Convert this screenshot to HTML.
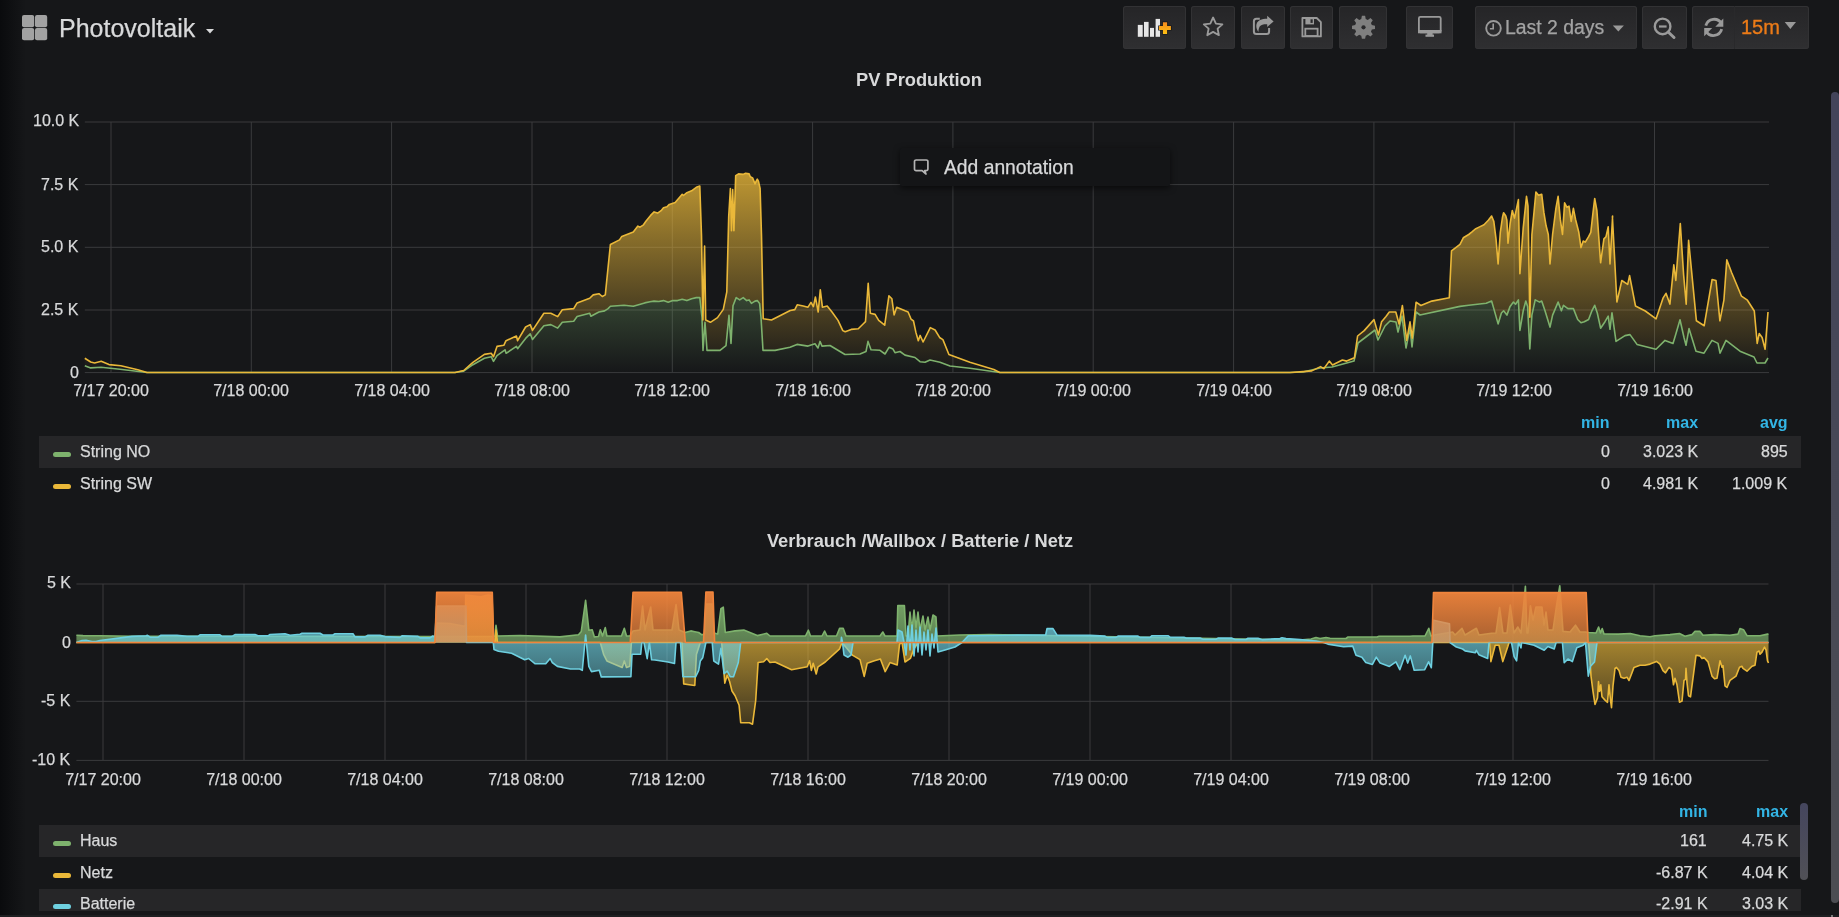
<!DOCTYPE html>
<html><head><meta charset="utf-8">
<style>
html,body{margin:0;padding:0;}
body{width:1839px;height:917px;overflow:hidden;background:#161719;position:relative;font-family:"Liberation Sans",sans-serif;}
.charts{position:absolute;left:0;top:0;}
.t{position:absolute;white-space:nowrap;will-change:transform;-webkit-text-stroke:0.25px currentColor;}
.leftshade{position:absolute;left:0;top:0;width:26px;height:917px;background:linear-gradient(to right,#0a0b0d,rgba(22,23,25,0));}
.row{position:absolute;left:39px;width:1762px;height:32px;background:#262628;}
.sw{position:absolute;left:53.2px;width:18px;height:5px;border-radius:2.5px;}
.btn{position:absolute;top:6px;height:42.7px;border-radius:3px;background:linear-gradient(#252527,#2f2f31);box-shadow:inset 0 0 0 1px #323234;box-sizing:border-box;}
.scroll{position:absolute;border-radius:4px;}
.popup{position:absolute;left:900px;top:147.7px;width:270px;height:38px;background:#141517;border-radius:2px;box-shadow:0 2px 6px rgba(0,0,0,0.6);}
</style></head>
<body>
<div class="leftshade"></div>
<div class="row" style="top:436px"></div>
<div class="row" style="top:825px"></div>
<div class="row" style="top:888.8px;height:22.2px"></div>
<svg class="charts" width="1839" height="917" viewBox="0 0 1839 917">
<defs>
<linearGradient id="g1y" gradientUnits="userSpaceOnUse" x1="0" y1="122" x2="0" y2="372.6"><stop offset="0" stop-color="#eab839" stop-opacity="1.0"/><stop offset="1" stop-color="#eab839" stop-opacity="0"/></linearGradient><linearGradient id="g1g" gradientUnits="userSpaceOnUse" x1="0" y1="122" x2="0" y2="372.6"><stop offset="0" stop-color="#7eb26d" stop-opacity="1.0"/><stop offset="1" stop-color="#7eb26d" stop-opacity="0"/></linearGradient>
<linearGradient id="g2g" gradientUnits="userSpaceOnUse" x1="0" y1="584" x2="0" y2="760"><stop offset="0" stop-color="#7eb26d" stop-opacity="1.0"/><stop offset="1" stop-color="#7eb26d" stop-opacity="0"/></linearGradient><linearGradient id="g2y" gradientUnits="userSpaceOnUse" x1="0" y1="584" x2="0" y2="760"><stop offset="0" stop-color="#eab839" stop-opacity="1.0"/><stop offset="1" stop-color="#eab839" stop-opacity="0"/></linearGradient><linearGradient id="g2c" gradientUnits="userSpaceOnUse" x1="0" y1="584" x2="0" y2="760"><stop offset="0" stop-color="#6ed0e0" stop-opacity="1.0"/><stop offset="1" stop-color="#6ed0e0" stop-opacity="0"/></linearGradient><linearGradient id="g2o" gradientUnits="userSpaceOnUse" x1="0" y1="584" x2="0" y2="760"><stop offset="0" stop-color="#ef843c" stop-opacity="1.0"/><stop offset="1" stop-color="#ef843c" stop-opacity="0"/></linearGradient>
</defs>
<g stroke="#3a3b3d" stroke-width="1" fill="none"><line x1="84.8" y1="122" x2="1769" y2="122"/><line x1="84.8" y1="184.6" x2="1769" y2="184.6"/><line x1="84.8" y1="247.3" x2="1769" y2="247.3"/><line x1="84.8" y1="310" x2="1769" y2="310"/><line x1="84.8" y1="372.6" x2="1769" y2="372.6"/><line x1="111.0" y1="122" x2="111.0" y2="372.6"/><line x1="251.3" y1="122" x2="251.3" y2="372.6"/><line x1="391.6" y1="122" x2="391.6" y2="372.6"/><line x1="532.0" y1="122" x2="532.0" y2="372.6"/><line x1="672.3" y1="122" x2="672.3" y2="372.6"/><line x1="812.6" y1="122" x2="812.6" y2="372.6"/><line x1="952.9" y1="122" x2="952.9" y2="372.6"/><line x1="1093.2" y1="122" x2="1093.2" y2="372.6"/><line x1="1233.6" y1="122" x2="1233.6" y2="372.6"/><line x1="1373.9" y1="122" x2="1373.9" y2="372.6"/><line x1="1514.2" y1="122" x2="1514.2" y2="372.6"/><line x1="1654.5" y1="122" x2="1654.5" y2="372.6"/><line x1="76.4" y1="584" x2="1768.5" y2="584"/><line x1="76.4" y1="642.6" x2="1768.5" y2="642.6"/><line x1="76.4" y1="701.3" x2="1768.5" y2="701.3"/><line x1="76.4" y1="760.4" x2="1768.5" y2="760.4"/><line x1="103.0" y1="584" x2="103.0" y2="760"/><line x1="244.0" y1="584" x2="244.0" y2="760"/><line x1="385.0" y1="584" x2="385.0" y2="760"/><line x1="526.0" y1="584" x2="526.0" y2="760"/><line x1="667.0" y1="584" x2="667.0" y2="760"/><line x1="808.0" y1="584" x2="808.0" y2="760"/><line x1="949.0" y1="584" x2="949.0" y2="760"/><line x1="1090.0" y1="584" x2="1090.0" y2="760"/><line x1="1231.0" y1="584" x2="1231.0" y2="760"/><line x1="1372.0" y1="584" x2="1372.0" y2="760"/><line x1="1513.0" y1="584" x2="1513.0" y2="760"/><line x1="1654.0" y1="584" x2="1654.0" y2="760"/></g>
<g>
<path d="M84.8,372.6 L84.8,365.7 L90.7,367.9 L101.0,367.3 L120.0,369.2 L147.0,372.5 L455.0,372.5 L463.7,371.1 L472.9,364.7 L484.4,358.3 L491.2,356.7 L493.5,361.3 L497.0,355.6 L505.0,349.8 L506.1,353.3 L516.4,346.4 L517.6,348.7 L525.6,338.4 L530.2,333.8 L532.5,339.5 L543.9,325.8 L550.8,324.6 L557.7,328.1 L562.3,322.3 L573.7,321.2 L577.1,316.6 L589.7,313.2 L590.9,316.2 L598.9,312.0 L604.6,310.9 L608.1,308.6 L610.4,306.3 L624.1,305.2 L633.3,306.3 L644.7,302.9 L650.0,301.7 L654.1,301.1 L658.8,301.5 L663.5,300.6 L668.2,302.2 L672.8,300.6 L677.5,300.6 L682.2,299.2 L686.9,300.6 L691.6,298.7 L696.3,297.6 L699.8,297.6 L702.0,317.5 L703.0,350.4 L705.0,322.3 L707.0,350.4 L720.0,350.4 L726.0,345.7 L729.0,315.2 L731.0,343.4 L733.0,305.8 L736.2,297.6 L739.7,299.9 L743.2,297.6 L746.7,300.6 L749.1,299.9 L751.4,303.4 L755.0,301.1 L757.3,300.6 L759.6,303.4 L761.0,317.5 L763.0,350.4 L775.0,350.4 L790.0,347.3 L797.0,344.4 L808.0,346.1 L815.0,343.7 L818.0,348.0 L820.0,341.4 L822.0,346.1 L830.0,345.5 L845.0,354.5 L860.0,354.0 L866.0,351.5 L868.0,341.4 L871.0,349.7 L880.0,350.3 L885.0,354.0 L889.0,347.3 L893.0,349.1 L895.0,352.7 L900.0,351.5 L905.0,355.1 L915.0,357.5 L920.0,361.7 L925.0,362.3 L930.0,360.0 L940.0,362.3 L950.0,366.0 L970.0,368.3 L1000.0,372.5 L1290.0,372.5 L1303.0,372.0 L1320.0,368.0 L1332.0,367.0 L1354.0,361.0 L1358.0,343.0 L1375.0,330.0 L1378.0,340.0 L1385.0,326.0 L1390.0,321.0 L1396.0,322.0 L1398.0,332.0 L1402.0,316.0 L1406.0,348.0 L1410.0,328.0 L1412.0,347.0 L1416.0,312.0 L1420.0,315.0 L1460.0,306.4 L1468.7,305.3 L1477.4,304.3 L1486.2,303.2 L1491.6,301.0 L1493.8,308.6 L1498.1,323.9 L1501.4,313.0 L1503.6,310.8 L1506.9,315.1 L1510.1,306.4 L1513.4,302.1 L1515.6,304.3 L1518.4,299.9 L1519.9,330.4 L1523.2,310.8 L1525.8,301.0 L1527.6,306.4 L1529.8,348.9 L1531.9,315.1 L1535.2,299.9 L1539.6,302.1 L1541.7,301.0 L1545.0,310.8 L1550.0,327.1 L1552.6,315.1 L1558.1,302.1 L1561.4,310.8 L1563.5,305.3 L1567.9,308.6 L1573.4,308.6 L1577.7,319.5 L1581.0,322.8 L1584.3,321.7 L1588.6,319.5 L1591.9,310.8 L1594.7,305.3 L1597.3,313.0 L1600.6,328.2 L1605.0,321.7 L1608.2,316.2 L1610.0,329.3 L1611.9,313.0 L1612.0,312.9 L1616.0,341.4 L1625.0,335.6 L1630.0,334.6 L1637.0,344.4 L1656.0,349.3 L1665.0,340.4 L1673.0,343.4 L1676.0,333.6 L1680.0,319.8 L1684.0,337.5 L1686.0,345.3 L1689.0,328.6 L1696.0,351.2 L1704.0,353.2 L1712.0,340.4 L1718.0,343.4 L1720.0,353.2 L1726.0,340.4 L1740.0,351.2 L1754.0,357.0 L1757.0,363.0 L1765.0,363.0 L1768.0,358.0 L1768.0,372.6Z" fill="url(#g1g)"/>
<path d="M84.8,358.3 L90.7,362.0 L94.6,363.0 L101.2,361.3 L109.0,364.6 L120.8,365.7 L137.8,369.8 L147.0,372.5 L455.0,372.5 L463.7,370.5 L472.9,362.4 L484.4,354.4 L491.2,353.3 L493.5,356.7 L497.0,346.4 L503.8,345.3 L506.0,340.7 L516.4,336.0 L517.6,340.7 L525.6,327.0 L530.2,324.6 L532.5,330.4 L543.9,313.2 L550.8,313.2 L557.7,316.6 L562.3,309.7 L573.7,308.6 L577.1,302.9 L589.7,298.3 L593.2,294.9 L598.9,293.7 L602.3,296.5 L605.3,294.9 L610.4,244.5 L619.5,239.9 L621.8,236.4 L633.3,231.9 L637.9,226.1 L640.0,227.2 L643.5,224.8 L645.9,221.3 L650.6,215.4 L654.1,211.9 L657.6,213.1 L661.1,210.7 L663.5,207.7 L667.0,206.8 L669.3,204.4 L675.2,202.5 L677.5,199.7 L682.2,194.3 L683.4,195.5 L686.9,192.7 L691.6,190.8 L696.3,187.3 L699.8,186.1 L701.5,235.4 L702.9,319.9 L704.6,246.0 L705.7,320.0 L710.4,322.3 L717.5,317.6 L723.3,309.4 L726.8,291.8 L728.7,216.6 L730.4,188.5 L731.5,230.7 L732.7,189.6 L733.9,230.7 L735.7,175.6 L738.5,173.9 L743.2,174.4 L745.6,173.2 L749.1,173.9 L750.3,176.7 L752.6,177.9 L755.0,183.8 L756.1,181.4 L757.3,179.1 L758.5,181.4 L760.1,188.5 L761.5,235.4 L763.2,318.7 L771.5,320.0 L780.9,315.2 L790.2,310.5 L794.8,309.6 L797.2,304.8 L803.2,306.0 L808.0,307.2 L811.0,302.4 L813.4,306.6 L815.4,297.0 L818.2,312.0 L820.3,289.8 L822.4,307.2 L827.2,306.0 L832.0,312.0 L838.0,320.4 L842.8,330.6 L845.2,331.8 L851.2,329.4 L858.3,328.8 L863.1,324.0 L865.5,321.6 L868.2,283.2 L870.3,313.2 L875.1,314.4 L878.7,320.4 L884.7,325.2 L888.9,295.8 L891.9,298.8 L894.1,315.0 L896.7,307.2 L905.1,310.8 L908.1,312.0 L911.1,319.2 L913.5,321.0 L915.9,332.4 L918.3,340.8 L920.1,335.4 L923.1,342.0 L930.3,327.6 L935.1,330.0 L939.9,337.8 L942.9,339.6 L948.9,354.5 L969.9,362.3 L993.8,369.5 L999.8,372.5 L1290.0,372.5 L1303.1,371.6 L1311.8,370.9 L1320.5,366.6 L1323.8,368.7 L1329.3,361.1 L1332.5,365.0 L1342.4,360.0 L1346.7,361.1 L1354.4,357.8 L1357.6,336.0 L1364.2,330.6 L1374.0,319.6 L1378.4,334.9 L1381.6,321.8 L1386.0,316.4 L1389.3,312.0 L1395.8,312.0 L1399.1,324.0 L1402.4,305.5 L1406.7,340.4 L1410.0,321.8 L1412.2,338.2 L1416.1,302.2 L1420.9,305.5 L1431.8,301.1 L1449.3,297.8 L1451.5,250.9 L1460.0,244.3 L1463.3,237.8 L1468.7,234.5 L1472.0,231.9 L1475.3,229.0 L1479.6,226.9 L1484.0,224.7 L1488.3,220.3 L1491.6,216.0 L1493.8,221.4 L1496.0,238.9 L1498.1,263.9 L1500.3,232.3 L1502.5,217.1 L1503.6,212.7 L1505.8,216.0 L1506.9,220.3 L1508.0,243.2 L1510.1,223.6 L1512.3,210.5 L1514.5,218.1 L1518.4,199.6 L1519.9,273.7 L1523.2,228.0 L1526.5,196.3 L1528.0,206.2 L1529.8,317.3 L1531.9,234.5 L1535.9,192.0 L1538.5,195.3 L1541.7,194.2 L1543.9,212.7 L1546.1,225.8 L1548.3,234.5 L1550.0,263.9 L1552.6,234.5 L1555.9,208.3 L1558.1,196.3 L1560.3,219.2 L1562.5,234.5 L1564.6,202.9 L1566.8,207.2 L1569.0,206.2 L1571.2,221.4 L1573.4,208.3 L1575.5,219.2 L1578.8,232.3 L1581.0,247.6 L1583.2,241.0 L1585.3,242.1 L1588.6,236.7 L1590.8,232.3 L1593.0,212.7 L1594.7,198.5 L1596.9,210.5 L1600.6,262.8 L1603.9,238.9 L1606.0,236.7 L1608.2,226.9 L1610.0,263.9 L1612.6,216.0 L1612.4,216.7 L1616.9,302.0 L1621.8,280.5 L1627.7,284.4 L1629.6,275.6 L1635.5,306.0 L1645.3,311.0 L1656.1,318.8 L1663.0,298.2 L1666.0,293.3 L1669.9,304.1 L1673.8,264.8 L1675.8,280.5 L1680.3,223.6 L1683.6,274.6 L1686.2,304.1 L1688.6,240.3 L1696.4,320.8 L1704.2,325.7 L1712.1,279.5 L1716.0,280.5 L1719.9,320.8 L1723.9,300.2 L1726.8,259.9 L1731.7,272.7 L1741.5,296.2 L1747.4,300.2 L1754.3,311.0 L1757.2,343.4 L1759.2,333.6 L1762.1,337.5 L1765.1,349.3 L1768.0,312.0 L1768.0,358.0 L1765.0,363.0 L1757.0,363.0 L1754.0,357.0 L1740.0,351.2 L1726.0,340.4 L1720.0,353.2 L1718.0,343.4 L1712.0,340.4 L1704.0,353.2 L1696.0,351.2 L1689.0,328.6 L1686.0,345.3 L1684.0,337.5 L1680.0,319.8 L1676.0,333.6 L1673.0,343.4 L1665.0,340.4 L1656.0,349.3 L1637.0,344.4 L1630.0,334.6 L1625.0,335.6 L1616.0,341.4 L1612.0,312.9 L1611.9,313.0 L1610.0,329.3 L1608.2,316.2 L1605.0,321.7 L1600.6,328.2 L1597.3,313.0 L1594.7,305.3 L1591.9,310.8 L1588.6,319.5 L1584.3,321.7 L1581.0,322.8 L1577.7,319.5 L1573.4,308.6 L1567.9,308.6 L1563.5,305.3 L1561.4,310.8 L1558.1,302.1 L1552.6,315.1 L1550.0,327.1 L1545.0,310.8 L1541.7,301.0 L1539.6,302.1 L1535.2,299.9 L1531.9,315.1 L1529.8,348.9 L1527.6,306.4 L1525.8,301.0 L1523.2,310.8 L1519.9,330.4 L1518.4,299.9 L1515.6,304.3 L1513.4,302.1 L1510.1,306.4 L1506.9,315.1 L1503.6,310.8 L1501.4,313.0 L1498.1,323.9 L1493.8,308.6 L1491.6,301.0 L1486.2,303.2 L1477.4,304.3 L1468.7,305.3 L1460.0,306.4 L1420.0,315.0 L1416.0,312.0 L1412.0,347.0 L1410.0,328.0 L1406.0,348.0 L1402.0,316.0 L1398.0,332.0 L1396.0,322.0 L1390.0,321.0 L1385.0,326.0 L1378.0,340.0 L1375.0,330.0 L1358.0,343.0 L1354.0,361.0 L1332.0,367.0 L1320.0,368.0 L1303.0,372.0 L1290.0,372.5 L1000.0,372.5 L970.0,368.3 L950.0,366.0 L940.0,362.3 L930.0,360.0 L925.0,362.3 L920.0,361.7 L915.0,357.5 L905.0,355.1 L900.0,351.5 L895.0,352.7 L893.0,349.1 L889.0,347.3 L885.0,354.0 L880.0,350.3 L871.0,349.7 L868.0,341.4 L866.0,351.5 L860.0,354.0 L845.0,354.5 L830.0,345.5 L822.0,346.1 L820.0,341.4 L818.0,348.0 L815.0,343.7 L808.0,346.1 L797.0,344.4 L790.0,347.3 L775.0,350.4 L763.0,350.4 L761.0,317.5 L759.6,303.4 L757.3,300.6 L755.0,301.1 L751.4,303.4 L749.1,299.9 L746.7,300.6 L743.2,297.6 L739.7,299.9 L736.2,297.6 L733.0,305.8 L731.0,343.4 L729.0,315.2 L726.0,345.7 L720.0,350.4 L707.0,350.4 L705.0,322.3 L703.0,350.4 L702.0,317.5 L699.8,297.6 L696.3,297.6 L691.6,298.7 L686.9,300.6 L682.2,299.2 L677.5,300.6 L672.8,300.6 L668.2,302.2 L663.5,300.6 L658.8,301.5 L654.1,301.1 L650.0,301.7 L644.7,302.9 L633.3,306.3 L624.1,305.2 L610.4,306.3 L608.1,308.6 L604.6,310.9 L598.9,312.0 L590.9,316.2 L589.7,313.2 L577.1,316.6 L573.7,321.2 L562.3,322.3 L557.7,328.1 L550.8,324.6 L543.9,325.8 L532.5,339.5 L530.2,333.8 L525.6,338.4 L517.6,348.7 L516.4,346.4 L506.1,353.3 L505.0,349.8 L497.0,355.6 L493.5,361.3 L491.2,356.7 L484.4,358.3 L472.9,364.7 L463.7,371.1 L455.0,372.5 L147.0,372.5 L120.0,369.2 L101.0,367.3 L90.7,367.9 L84.8,365.7Z" fill="url(#g1y)"/>
<path d="M84.8,365.7 L90.7,367.9 L101.0,367.3 L120.0,369.2 L147.0,372.5 L455.0,372.5 L463.7,371.1 L472.9,364.7 L484.4,358.3 L491.2,356.7 L493.5,361.3 L497.0,355.6 L505.0,349.8 L506.1,353.3 L516.4,346.4 L517.6,348.7 L525.6,338.4 L530.2,333.8 L532.5,339.5 L543.9,325.8 L550.8,324.6 L557.7,328.1 L562.3,322.3 L573.7,321.2 L577.1,316.6 L589.7,313.2 L590.9,316.2 L598.9,312.0 L604.6,310.9 L608.1,308.6 L610.4,306.3 L624.1,305.2 L633.3,306.3 L644.7,302.9 L650.0,301.7 L654.1,301.1 L658.8,301.5 L663.5,300.6 L668.2,302.2 L672.8,300.6 L677.5,300.6 L682.2,299.2 L686.9,300.6 L691.6,298.7 L696.3,297.6 L699.8,297.6 L702.0,317.5 L703.0,350.4 L705.0,322.3 L707.0,350.4 L720.0,350.4 L726.0,345.7 L729.0,315.2 L731.0,343.4 L733.0,305.8 L736.2,297.6 L739.7,299.9 L743.2,297.6 L746.7,300.6 L749.1,299.9 L751.4,303.4 L755.0,301.1 L757.3,300.6 L759.6,303.4 L761.0,317.5 L763.0,350.4 L775.0,350.4 L790.0,347.3 L797.0,344.4 L808.0,346.1 L815.0,343.7 L818.0,348.0 L820.0,341.4 L822.0,346.1 L830.0,345.5 L845.0,354.5 L860.0,354.0 L866.0,351.5 L868.0,341.4 L871.0,349.7 L880.0,350.3 L885.0,354.0 L889.0,347.3 L893.0,349.1 L895.0,352.7 L900.0,351.5 L905.0,355.1 L915.0,357.5 L920.0,361.7 L925.0,362.3 L930.0,360.0 L940.0,362.3 L950.0,366.0 L970.0,368.3 L1000.0,372.5 L1290.0,372.5 L1303.0,372.0 L1320.0,368.0 L1332.0,367.0 L1354.0,361.0 L1358.0,343.0 L1375.0,330.0 L1378.0,340.0 L1385.0,326.0 L1390.0,321.0 L1396.0,322.0 L1398.0,332.0 L1402.0,316.0 L1406.0,348.0 L1410.0,328.0 L1412.0,347.0 L1416.0,312.0 L1420.0,315.0 L1460.0,306.4 L1468.7,305.3 L1477.4,304.3 L1486.2,303.2 L1491.6,301.0 L1493.8,308.6 L1498.1,323.9 L1501.4,313.0 L1503.6,310.8 L1506.9,315.1 L1510.1,306.4 L1513.4,302.1 L1515.6,304.3 L1518.4,299.9 L1519.9,330.4 L1523.2,310.8 L1525.8,301.0 L1527.6,306.4 L1529.8,348.9 L1531.9,315.1 L1535.2,299.9 L1539.6,302.1 L1541.7,301.0 L1545.0,310.8 L1550.0,327.1 L1552.6,315.1 L1558.1,302.1 L1561.4,310.8 L1563.5,305.3 L1567.9,308.6 L1573.4,308.6 L1577.7,319.5 L1581.0,322.8 L1584.3,321.7 L1588.6,319.5 L1591.9,310.8 L1594.7,305.3 L1597.3,313.0 L1600.6,328.2 L1605.0,321.7 L1608.2,316.2 L1610.0,329.3 L1611.9,313.0 L1612.0,312.9 L1616.0,341.4 L1625.0,335.6 L1630.0,334.6 L1637.0,344.4 L1656.0,349.3 L1665.0,340.4 L1673.0,343.4 L1676.0,333.6 L1680.0,319.8 L1684.0,337.5 L1686.0,345.3 L1689.0,328.6 L1696.0,351.2 L1704.0,353.2 L1712.0,340.4 L1718.0,343.4 L1720.0,353.2 L1726.0,340.4 L1740.0,351.2 L1754.0,357.0 L1757.0,363.0 L1765.0,363.0 L1768.0,358.0" fill="none" stroke="#7eb26d" stroke-width="1.6" stroke-linejoin="round"/>
<path d="M84.8,358.3 L90.7,362.0 L94.6,363.0 L101.2,361.3 L109.0,364.6 L120.8,365.7 L137.8,369.8 L147.0,372.5 L455.0,372.5 L463.7,370.5 L472.9,362.4 L484.4,354.4 L491.2,353.3 L493.5,356.7 L497.0,346.4 L503.8,345.3 L506.0,340.7 L516.4,336.0 L517.6,340.7 L525.6,327.0 L530.2,324.6 L532.5,330.4 L543.9,313.2 L550.8,313.2 L557.7,316.6 L562.3,309.7 L573.7,308.6 L577.1,302.9 L589.7,298.3 L593.2,294.9 L598.9,293.7 L602.3,296.5 L605.3,294.9 L610.4,244.5 L619.5,239.9 L621.8,236.4 L633.3,231.9 L637.9,226.1 L640.0,227.2 L643.5,224.8 L645.9,221.3 L650.6,215.4 L654.1,211.9 L657.6,213.1 L661.1,210.7 L663.5,207.7 L667.0,206.8 L669.3,204.4 L675.2,202.5 L677.5,199.7 L682.2,194.3 L683.4,195.5 L686.9,192.7 L691.6,190.8 L696.3,187.3 L699.8,186.1 L701.5,235.4 L702.9,319.9 L704.6,246.0 L705.7,320.0 L710.4,322.3 L717.5,317.6 L723.3,309.4 L726.8,291.8 L728.7,216.6 L730.4,188.5 L731.5,230.7 L732.7,189.6 L733.9,230.7 L735.7,175.6 L738.5,173.9 L743.2,174.4 L745.6,173.2 L749.1,173.9 L750.3,176.7 L752.6,177.9 L755.0,183.8 L756.1,181.4 L757.3,179.1 L758.5,181.4 L760.1,188.5 L761.5,235.4 L763.2,318.7 L771.5,320.0 L780.9,315.2 L790.2,310.5 L794.8,309.6 L797.2,304.8 L803.2,306.0 L808.0,307.2 L811.0,302.4 L813.4,306.6 L815.4,297.0 L818.2,312.0 L820.3,289.8 L822.4,307.2 L827.2,306.0 L832.0,312.0 L838.0,320.4 L842.8,330.6 L845.2,331.8 L851.2,329.4 L858.3,328.8 L863.1,324.0 L865.5,321.6 L868.2,283.2 L870.3,313.2 L875.1,314.4 L878.7,320.4 L884.7,325.2 L888.9,295.8 L891.9,298.8 L894.1,315.0 L896.7,307.2 L905.1,310.8 L908.1,312.0 L911.1,319.2 L913.5,321.0 L915.9,332.4 L918.3,340.8 L920.1,335.4 L923.1,342.0 L930.3,327.6 L935.1,330.0 L939.9,337.8 L942.9,339.6 L948.9,354.5 L969.9,362.3 L993.8,369.5 L999.8,372.5 L1290.0,372.5 L1303.1,371.6 L1311.8,370.9 L1320.5,366.6 L1323.8,368.7 L1329.3,361.1 L1332.5,365.0 L1342.4,360.0 L1346.7,361.1 L1354.4,357.8 L1357.6,336.0 L1364.2,330.6 L1374.0,319.6 L1378.4,334.9 L1381.6,321.8 L1386.0,316.4 L1389.3,312.0 L1395.8,312.0 L1399.1,324.0 L1402.4,305.5 L1406.7,340.4 L1410.0,321.8 L1412.2,338.2 L1416.1,302.2 L1420.9,305.5 L1431.8,301.1 L1449.3,297.8 L1451.5,250.9 L1460.0,244.3 L1463.3,237.8 L1468.7,234.5 L1472.0,231.9 L1475.3,229.0 L1479.6,226.9 L1484.0,224.7 L1488.3,220.3 L1491.6,216.0 L1493.8,221.4 L1496.0,238.9 L1498.1,263.9 L1500.3,232.3 L1502.5,217.1 L1503.6,212.7 L1505.8,216.0 L1506.9,220.3 L1508.0,243.2 L1510.1,223.6 L1512.3,210.5 L1514.5,218.1 L1518.4,199.6 L1519.9,273.7 L1523.2,228.0 L1526.5,196.3 L1528.0,206.2 L1529.8,317.3 L1531.9,234.5 L1535.9,192.0 L1538.5,195.3 L1541.7,194.2 L1543.9,212.7 L1546.1,225.8 L1548.3,234.5 L1550.0,263.9 L1552.6,234.5 L1555.9,208.3 L1558.1,196.3 L1560.3,219.2 L1562.5,234.5 L1564.6,202.9 L1566.8,207.2 L1569.0,206.2 L1571.2,221.4 L1573.4,208.3 L1575.5,219.2 L1578.8,232.3 L1581.0,247.6 L1583.2,241.0 L1585.3,242.1 L1588.6,236.7 L1590.8,232.3 L1593.0,212.7 L1594.7,198.5 L1596.9,210.5 L1600.6,262.8 L1603.9,238.9 L1606.0,236.7 L1608.2,226.9 L1610.0,263.9 L1612.6,216.0 L1612.4,216.7 L1616.9,302.0 L1621.8,280.5 L1627.7,284.4 L1629.6,275.6 L1635.5,306.0 L1645.3,311.0 L1656.1,318.8 L1663.0,298.2 L1666.0,293.3 L1669.9,304.1 L1673.8,264.8 L1675.8,280.5 L1680.3,223.6 L1683.6,274.6 L1686.2,304.1 L1688.6,240.3 L1696.4,320.8 L1704.2,325.7 L1712.1,279.5 L1716.0,280.5 L1719.9,320.8 L1723.9,300.2 L1726.8,259.9 L1731.7,272.7 L1741.5,296.2 L1747.4,300.2 L1754.3,311.0 L1757.2,343.4 L1759.2,333.6 L1762.1,337.5 L1765.1,349.3 L1768.0,312.0" fill="none" stroke="#eab839" stroke-width="1.6" stroke-linejoin="round"/>
</g>
<g>
<path d="M76.4,642.5 L76.4,635.3 L83.0,635.6 L100.0,635.8 L132.0,636.2 L435.0,636.5 L466.0,636.5 L493.0,636.5 L495.0,636.0 L496.0,625.4 L497.5,636.0 L520.0,635.5 L560.0,636.9 L578.5,634.7 L581.3,631.4 L585.6,600.4 L588.9,630.3 L592.2,629.8 L594.4,636.9 L598.5,636.5 L600.3,629.8 L602.5,636.0 L605.3,627.6 L606.9,636.0 L621.5,636.0 L624.3,628.2 L626.5,636.0 L630.0,636.0 L633.0,631.0 L640.0,630.0 L642.6,606.0 L645.0,630.0 L650.7,607.0 L653.0,630.0 L672.0,630.0 L676.1,604.5 L679.0,630.0 L685.0,632.5 L690.8,630.9 L694.8,631.7 L698.7,632.5 L701.9,634.8 L704.5,634.0 L706.0,604.0 L712.5,604.0 L714.0,633.0 L717.7,634.0 L720.9,608.7 L723.3,607.2 L725.3,632.5 L735.1,630.9 L743.8,630.1 L757.3,635.6 L766.8,633.3 L770.0,636.0 L791.6,636.0 L805.5,636.0 L808.4,630.2 L810.5,636.0 L822.0,636.0 L824.6,631.0 L827.0,636.0 L836.5,636.0 L839.6,628.4 L843.2,628.4 L846.0,636.0 L880.0,636.0 L882.8,632.0 L885.0,636.0 L897.0,636.0 L897.8,605.6 L904.4,605.6 L906.0,636.0 L908.0,636.0 L910.0,612.0 L912.0,630.0 L914.0,610.0 L916.0,628.0 L918.0,612.0 L920.0,630.0 L923.0,616.0 L925.0,630.0 L928.0,617.0 L930.0,630.0 L933.0,615.0 L936.0,617.0 L937.0,636.0 L960.0,635.0 L990.0,634.5 L1300.0,640.0 L1311.0,639.0 L1316.0,637.5 L1320.0,638.5 L1326.0,637.5 L1330.0,638.3 L1346.0,638.5 L1348.0,637.0 L1377.0,637.0 L1379.0,636.3 L1410.0,636.3 L1413.0,636.0 L1425.0,636.0 L1428.8,628.3 L1431.0,636.0 L1433.0,635.2 L1452.6,632.0 L1455.0,635.0 L1462.0,628.3 L1465.0,635.0 L1476.4,628.3 L1479.0,635.0 L1491.5,633.3 L1496.0,633.0 L1499.6,607.6 L1503.0,633.0 L1507.0,633.0 L1510.3,605.1 L1514.0,633.0 L1517.8,627.0 L1521.0,633.0 L1525.4,586.3 L1527.0,633.0 L1528.0,633.0 L1530.4,605.7 L1533.0,620.0 L1536.0,607.0 L1542.0,607.0 L1544.0,625.0 L1546.0,612.0 L1548.0,630.0 L1553.0,630.0 L1556.7,604.5 L1559.8,585.7 L1563.0,631.4 L1570.0,632.0 L1575.5,625.2 L1580.0,632.0 L1585.6,632.0 L1588.8,632.5 L1596.0,633.0 L1598.6,627.0 L1600.5,633.0 L1602.2,628.6 L1604.0,634.0 L1618.4,634.1 L1630.3,633.5 L1640.0,635.7 L1650.0,636.8 L1655.0,635.7 L1670.0,634.6 L1679.5,633.5 L1685.0,636.3 L1692.0,634.6 L1695.0,631.4 L1700.0,631.4 L1703.0,635.2 L1715.0,634.6 L1730.0,635.2 L1738.0,634.1 L1740.0,628.6 L1743.5,629.7 L1747.0,635.7 L1760.0,635.7 L1767.5,634.1 L1768.5,634.0 L1768.5,642.5Z" fill="url(#g2g)"/>
<path d="M76.4,635.3 L83.0,635.6 L100.0,635.8 L132.0,636.2 L435.0,636.5 L466.0,636.5 L493.0,636.5 L495.0,636.0 L496.0,625.4 L497.5,636.0 L520.0,635.5 L560.0,636.9 L578.5,634.7 L581.3,631.4 L585.6,600.4 L588.9,630.3 L592.2,629.8 L594.4,636.9 L598.5,636.5 L600.3,629.8 L602.5,636.0 L605.3,627.6 L606.9,636.0 L621.5,636.0 L624.3,628.2 L626.5,636.0 L630.0,636.0 L633.0,631.0 L640.0,630.0 L642.6,606.0 L645.0,630.0 L650.7,607.0 L653.0,630.0 L672.0,630.0 L676.1,604.5 L679.0,630.0 L685.0,632.5 L690.8,630.9 L694.8,631.7 L698.7,632.5 L701.9,634.8 L704.5,634.0 L706.0,604.0 L712.5,604.0 L714.0,633.0 L717.7,634.0 L720.9,608.7 L723.3,607.2 L725.3,632.5 L735.1,630.9 L743.8,630.1 L757.3,635.6 L766.8,633.3 L770.0,636.0 L791.6,636.0 L805.5,636.0 L808.4,630.2 L810.5,636.0 L822.0,636.0 L824.6,631.0 L827.0,636.0 L836.5,636.0 L839.6,628.4 L843.2,628.4 L846.0,636.0 L880.0,636.0 L882.8,632.0 L885.0,636.0 L897.0,636.0 L897.8,605.6 L904.4,605.6 L906.0,636.0 L908.0,636.0 L910.0,612.0 L912.0,630.0 L914.0,610.0 L916.0,628.0 L918.0,612.0 L920.0,630.0 L923.0,616.0 L925.0,630.0 L928.0,617.0 L930.0,630.0 L933.0,615.0 L936.0,617.0 L937.0,636.0 L960.0,635.0 L990.0,634.5 L1300.0,640.0 L1311.0,639.0 L1316.0,637.5 L1320.0,638.5 L1326.0,637.5 L1330.0,638.3 L1346.0,638.5 L1348.0,637.0 L1377.0,637.0 L1379.0,636.3 L1410.0,636.3 L1413.0,636.0 L1425.0,636.0 L1428.8,628.3 L1431.0,636.0 L1433.0,635.2 L1452.6,632.0 L1455.0,635.0 L1462.0,628.3 L1465.0,635.0 L1476.4,628.3 L1479.0,635.0 L1491.5,633.3 L1496.0,633.0 L1499.6,607.6 L1503.0,633.0 L1507.0,633.0 L1510.3,605.1 L1514.0,633.0 L1517.8,627.0 L1521.0,633.0 L1525.4,586.3 L1527.0,633.0 L1528.0,633.0 L1530.4,605.7 L1533.0,620.0 L1536.0,607.0 L1542.0,607.0 L1544.0,625.0 L1546.0,612.0 L1548.0,630.0 L1553.0,630.0 L1556.7,604.5 L1559.8,585.7 L1563.0,631.4 L1570.0,632.0 L1575.5,625.2 L1580.0,632.0 L1585.6,632.0 L1588.8,632.5 L1596.0,633.0 L1598.6,627.0 L1600.5,633.0 L1602.2,628.6 L1604.0,634.0 L1618.4,634.1 L1630.3,633.5 L1640.0,635.7 L1650.0,636.8 L1655.0,635.7 L1670.0,634.6 L1679.5,633.5 L1685.0,636.3 L1692.0,634.6 L1695.0,631.4 L1700.0,631.4 L1703.0,635.2 L1715.0,634.6 L1730.0,635.2 L1738.0,634.1 L1740.0,628.6 L1743.5,629.7 L1747.0,635.7 L1760.0,635.7 L1767.5,634.1 L1768.5,634.0" fill="none" stroke="#7eb26d" stroke-width="1.6" stroke-linejoin="round"/>
<path d="M76.4,642.5 L76.4,642.5 L435.0,642.5 L436.7,623.0 L450.0,623.5 L463.0,626.0 L465.3,626.0 L465.7,595.0 L481.0,596.8 L488.0,595.0 L492.0,595.5 L493.5,642.5 L495.0,642.5 L496.0,630.0 L497.5,642.5 L600.3,642.5 L603.6,654.3 L606.9,660.9 L614.5,664.2 L622.2,667.4 L624.3,660.9 L626.5,667.4 L629.8,666.3 L631.4,642.5 L682.0,642.5 L683.7,683.9 L689.2,684.7 L694.8,685.5 L696.4,654.6 L700.3,642.5 L721.7,642.5 L724.8,683.1 L727.2,675.2 L729.6,681.5 L732.0,691.0 L735.1,695.8 L739.1,705.3 L740.7,722.7 L749.4,722.7 L752.5,724.2 L755.7,700.5 L758.1,662.5 L763.6,661.7 L766.8,658.6 L770.0,662.5 L775.0,662.0 L791.6,669.8 L807.2,666.8 L809.6,660.8 L811.4,670.4 L813.2,663.2 L816.2,674.0 L818.0,666.8 L825.2,662.0 L839.6,648.8 L842.0,642.5 L852.8,655.4 L860.0,659.6 L864.2,676.4 L867.2,663.2 L874.4,660.8 L880.4,659.0 L885.2,671.6 L890.0,662.6 L897.2,665.0 L899.6,644.0 L902.0,642.5 L905.0,662.0 L910.4,658.4 L914.0,648.8 L918.0,642.5 L1489.6,642.5 L1490.9,661.6 L1495.2,645.2 L1499.0,645.2 L1502.8,661.6 L1507.8,646.5 L1509.0,642.5 L1588.5,642.5 L1590.0,660.0 L1591.0,676.1 L1593.0,691.4 L1595.0,704.5 L1597.5,697.9 L1598.5,681.5 L1599.5,691.4 L1600.8,684.8 L1602.0,696.8 L1605.0,700.1 L1607.5,702.3 L1609.0,684.8 L1610.5,700.1 L1611.5,707.7 L1613.0,685.9 L1615.0,668.5 L1616.5,667.4 L1619.0,670.6 L1621.0,677.2 L1624.0,678.3 L1627.0,677.2 L1629.0,680.5 L1632.0,672.8 L1634.0,667.4 L1640.0,665.2 L1645.0,665.2 L1650.0,664.1 L1656.5,661.4 L1660.0,664.1 L1663.0,670.6 L1665.5,672.8 L1669.0,667.4 L1671.5,669.5 L1673.5,684.8 L1675.0,678.2 L1677.0,684.8 L1679.5,702.2 L1682.0,701.1 L1684.0,680.4 L1685.5,679.3 L1686.0,668.4 L1687.0,682.6 L1688.5,695.7 L1690.5,696.8 L1696.0,655.3 L1700.0,655.9 L1702.0,658.6 L1704.0,657.5 L1708.0,661.9 L1712.0,676.1 L1714.5,678.8 L1717.0,678.2 L1720.0,660.8 L1722.0,667.3 L1723.0,665.7 L1725.0,685.9 L1727.0,687.5 L1730.0,680.4 L1736.0,676.1 L1739.5,667.3 L1742.0,666.3 L1743.0,668.4 L1747.0,671.2 L1752.0,666.3 L1755.0,665.2 L1757.0,652.1 L1759.0,651.0 L1760.0,654.3 L1762.0,652.1 L1764.5,647.2 L1766.0,649.9 L1767.5,660.8 L1768.5,663.0 L1768.5,642.5Z" fill="url(#g2y)"/>
<path d="M76.4,642.5 L435.0,642.5 L436.7,623.0 L450.0,623.5 L463.0,626.0 L465.3,626.0 L465.7,595.0 L481.0,596.8 L488.0,595.0 L492.0,595.5 L493.5,642.5 L495.0,642.5 L496.0,630.0 L497.5,642.5 L600.3,642.5 L603.6,654.3 L606.9,660.9 L614.5,664.2 L622.2,667.4 L624.3,660.9 L626.5,667.4 L629.8,666.3 L631.4,642.5 L682.0,642.5 L683.7,683.9 L689.2,684.7 L694.8,685.5 L696.4,654.6 L700.3,642.5 L721.7,642.5 L724.8,683.1 L727.2,675.2 L729.6,681.5 L732.0,691.0 L735.1,695.8 L739.1,705.3 L740.7,722.7 L749.4,722.7 L752.5,724.2 L755.7,700.5 L758.1,662.5 L763.6,661.7 L766.8,658.6 L770.0,662.5 L775.0,662.0 L791.6,669.8 L807.2,666.8 L809.6,660.8 L811.4,670.4 L813.2,663.2 L816.2,674.0 L818.0,666.8 L825.2,662.0 L839.6,648.8 L842.0,642.5 L852.8,655.4 L860.0,659.6 L864.2,676.4 L867.2,663.2 L874.4,660.8 L880.4,659.0 L885.2,671.6 L890.0,662.6 L897.2,665.0 L899.6,644.0 L902.0,642.5 L905.0,662.0 L910.4,658.4 L914.0,648.8 L918.0,642.5 L1489.6,642.5 L1490.9,661.6 L1495.2,645.2 L1499.0,645.2 L1502.8,661.6 L1507.8,646.5 L1509.0,642.5 L1588.5,642.5 L1590.0,660.0 L1591.0,676.1 L1593.0,691.4 L1595.0,704.5 L1597.5,697.9 L1598.5,681.5 L1599.5,691.4 L1600.8,684.8 L1602.0,696.8 L1605.0,700.1 L1607.5,702.3 L1609.0,684.8 L1610.5,700.1 L1611.5,707.7 L1613.0,685.9 L1615.0,668.5 L1616.5,667.4 L1619.0,670.6 L1621.0,677.2 L1624.0,678.3 L1627.0,677.2 L1629.0,680.5 L1632.0,672.8 L1634.0,667.4 L1640.0,665.2 L1645.0,665.2 L1650.0,664.1 L1656.5,661.4 L1660.0,664.1 L1663.0,670.6 L1665.5,672.8 L1669.0,667.4 L1671.5,669.5 L1673.5,684.8 L1675.0,678.2 L1677.0,684.8 L1679.5,702.2 L1682.0,701.1 L1684.0,680.4 L1685.5,679.3 L1686.0,668.4 L1687.0,682.6 L1688.5,695.7 L1690.5,696.8 L1696.0,655.3 L1700.0,655.9 L1702.0,658.6 L1704.0,657.5 L1708.0,661.9 L1712.0,676.1 L1714.5,678.8 L1717.0,678.2 L1720.0,660.8 L1722.0,667.3 L1723.0,665.7 L1725.0,685.9 L1727.0,687.5 L1730.0,680.4 L1736.0,676.1 L1739.5,667.3 L1742.0,666.3 L1743.0,668.4 L1747.0,671.2 L1752.0,666.3 L1755.0,665.2 L1757.0,652.1 L1759.0,651.0 L1760.0,654.3 L1762.0,652.1 L1764.5,647.2 L1766.0,649.9 L1767.5,660.8 L1768.5,663.0" fill="none" stroke="#eab839" stroke-width="1.6" stroke-linejoin="round"/>
<path d="M76.4,642.5 L76.4,642.4 L82.0,640.5 L86.0,640.3 L92.0,641.5 L96.0,641.5 L100.0,640.5 L132.0,636.4 L146.0,635.8 L147.5,635.3 L150.0,637.2 L158.0,637.2 L161.0,635.3 L177.0,635.3 L187.0,636.4 L198.0,636.4 L200.0,634.8 L220.0,634.8 L222.0,636.4 L232.0,636.4 L235.0,634.6 L255.0,634.5 L258.0,635.8 L268.0,635.8 L270.0,634.5 L285.0,633.8 L290.0,635.3 L300.0,634.3 L302.0,633.3 L320.0,633.3 L323.0,635.0 L333.0,635.0 L335.0,633.8 L353.0,633.8 L355.0,636.9 L365.0,636.9 L368.0,635.3 L380.0,635.3 L385.0,636.6 L400.0,637.4 L402.0,635.8 L418.0,636.4 L420.0,637.9 L430.0,637.9 L432.8,636.0 L435.0,637.0 L436.7,606.0 L466.0,606.0 L466.5,642.5 L493.3,642.5 L494.0,649.4 L498.5,651.3 L511.6,653.3 L524.7,659.8 L528.6,658.5 L535.2,663.8 L545.7,663.8 L550.2,658.5 L552.2,662.5 L557.4,666.4 L570.5,669.0 L579.7,669.0 L582.3,670.3 L585.6,635.0 L588.8,666.4 L591.5,671.6 L599.3,670.3 L601.3,676.9 L630.9,676.7 L632.0,654.3 L640.7,654.3 L641.8,642.5 L644.0,642.5 L647.2,658.7 L649.4,642.5 L651.6,659.8 L655.0,660.0 L668.0,662.0 L674.5,663.5 L676.0,642.5 L680.5,642.5 L682.9,676.8 L695.6,676.8 L698.7,670.4 L700.3,661.0 L702.7,657.8 L705.9,642.5 L712.2,642.5 L713.8,661.0 L718.5,664.1 L720.9,648.3 L724.1,673.6 L727.2,671.2 L730.4,676.8 L733.5,676.8 L738.3,662.5 L740.7,642.5 L841.0,642.5 L841.5,637.4 L842.5,642.5 L844.0,655.0 L848.0,657.2 L851.0,655.0 L853.0,642.5 L897.0,642.5 L898.0,630.0 L902.0,632.0 L904.0,642.5 L906.0,655.0 L908.0,626.0 L910.0,650.0 L912.0,625.0 L914.0,656.0 L916.0,630.0 L918.0,652.0 L920.0,627.0 L922.0,655.0 L924.0,632.0 L926.0,650.0 L928.0,630.0 L930.0,656.0 L932.0,634.0 L934.0,648.0 L936.0,628.0 L938.0,652.0 L945.0,650.0 L955.0,647.0 L962.0,642.5 L968.3,635.8 L1007.5,635.2 L1045.7,635.0 L1047.0,628.6 L1053.0,628.6 L1057.0,635.2 L1090.0,635.4 L1105.0,636.1 L1107.0,637.4 L1116.0,637.4 L1118.0,636.1 L1138.0,636.1 L1140.0,637.4 L1150.0,637.4 L1152.0,635.7 L1168.0,635.7 L1170.0,637.2 L1184.0,637.2 L1186.0,638.1 L1200.0,638.1 L1203.0,639.2 L1216.0,639.2 L1218.0,638.1 L1232.0,638.1 L1235.0,639.5 L1246.0,639.5 L1248.0,638.3 L1258.0,638.3 L1262.0,639.6 L1280.0,638.6 L1282.0,637.8 L1286.0,638.6 L1300.0,639.5 L1310.0,640.5 L1316.0,641.0 L1323.6,642.5 L1327.9,644.1 L1343.6,646.8 L1352.7,646.1 L1356.0,655.3 L1361.9,657.2 L1365.8,662.5 L1372.4,664.4 L1376.3,657.2 L1380.2,663.1 L1389.4,666.4 L1395.9,661.8 L1399.8,669.7 L1405.1,655.3 L1407.7,663.1 L1410.3,655.9 L1414.2,670.3 L1424.7,669.7 L1428.6,661.8 L1431.3,667.7 L1432.8,642.5 L1433.5,620.2 L1449.5,623.9 L1450.0,642.5 L1456.4,647.1 L1462.6,649.0 L1465.1,650.9 L1475.2,652.8 L1476.4,650.3 L1478.9,654.7 L1487.7,658.4 L1489.0,642.5 L1511.5,642.5 L1514.1,656.5 L1516.6,660.9 L1518.5,642.5 L1521.0,647.8 L1521.6,642.5 L1534.1,645.2 L1544.2,650.3 L1547.9,646.5 L1554.2,649.0 L1556.1,642.5 L1562.4,642.5 L1564.2,662.8 L1568.0,659.0 L1572.4,661.6 L1576.8,647.8 L1583.1,645.2 L1585.6,642.5 L1585.5,642.5 L1588.3,676.1 L1590.5,666.3 L1594.5,661.9 L1597.0,642.5 L1768.5,642.5 L1768.5,642.5Z" fill="url(#g2c)"/>
<path d="M76.4,642.4 L82.0,640.5 L86.0,640.3 L92.0,641.5 L96.0,641.5 L100.0,640.5 L132.0,636.4 L146.0,635.8 L147.5,635.3 L150.0,637.2 L158.0,637.2 L161.0,635.3 L177.0,635.3 L187.0,636.4 L198.0,636.4 L200.0,634.8 L220.0,634.8 L222.0,636.4 L232.0,636.4 L235.0,634.6 L255.0,634.5 L258.0,635.8 L268.0,635.8 L270.0,634.5 L285.0,633.8 L290.0,635.3 L300.0,634.3 L302.0,633.3 L320.0,633.3 L323.0,635.0 L333.0,635.0 L335.0,633.8 L353.0,633.8 L355.0,636.9 L365.0,636.9 L368.0,635.3 L380.0,635.3 L385.0,636.6 L400.0,637.4 L402.0,635.8 L418.0,636.4 L420.0,637.9 L430.0,637.9 L432.8,636.0 L435.0,637.0 L436.7,606.0 L466.0,606.0 L466.5,642.5 L493.3,642.5 L494.0,649.4 L498.5,651.3 L511.6,653.3 L524.7,659.8 L528.6,658.5 L535.2,663.8 L545.7,663.8 L550.2,658.5 L552.2,662.5 L557.4,666.4 L570.5,669.0 L579.7,669.0 L582.3,670.3 L585.6,635.0 L588.8,666.4 L591.5,671.6 L599.3,670.3 L601.3,676.9 L630.9,676.7 L632.0,654.3 L640.7,654.3 L641.8,642.5 L644.0,642.5 L647.2,658.7 L649.4,642.5 L651.6,659.8 L655.0,660.0 L668.0,662.0 L674.5,663.5 L676.0,642.5 L680.5,642.5 L682.9,676.8 L695.6,676.8 L698.7,670.4 L700.3,661.0 L702.7,657.8 L705.9,642.5 L712.2,642.5 L713.8,661.0 L718.5,664.1 L720.9,648.3 L724.1,673.6 L727.2,671.2 L730.4,676.8 L733.5,676.8 L738.3,662.5 L740.7,642.5 L841.0,642.5 L841.5,637.4 L842.5,642.5 L844.0,655.0 L848.0,657.2 L851.0,655.0 L853.0,642.5 L897.0,642.5 L898.0,630.0 L902.0,632.0 L904.0,642.5 L906.0,655.0 L908.0,626.0 L910.0,650.0 L912.0,625.0 L914.0,656.0 L916.0,630.0 L918.0,652.0 L920.0,627.0 L922.0,655.0 L924.0,632.0 L926.0,650.0 L928.0,630.0 L930.0,656.0 L932.0,634.0 L934.0,648.0 L936.0,628.0 L938.0,652.0 L945.0,650.0 L955.0,647.0 L962.0,642.5 L968.3,635.8 L1007.5,635.2 L1045.7,635.0 L1047.0,628.6 L1053.0,628.6 L1057.0,635.2 L1090.0,635.4 L1105.0,636.1 L1107.0,637.4 L1116.0,637.4 L1118.0,636.1 L1138.0,636.1 L1140.0,637.4 L1150.0,637.4 L1152.0,635.7 L1168.0,635.7 L1170.0,637.2 L1184.0,637.2 L1186.0,638.1 L1200.0,638.1 L1203.0,639.2 L1216.0,639.2 L1218.0,638.1 L1232.0,638.1 L1235.0,639.5 L1246.0,639.5 L1248.0,638.3 L1258.0,638.3 L1262.0,639.6 L1280.0,638.6 L1282.0,637.8 L1286.0,638.6 L1300.0,639.5 L1310.0,640.5 L1316.0,641.0 L1323.6,642.5 L1327.9,644.1 L1343.6,646.8 L1352.7,646.1 L1356.0,655.3 L1361.9,657.2 L1365.8,662.5 L1372.4,664.4 L1376.3,657.2 L1380.2,663.1 L1389.4,666.4 L1395.9,661.8 L1399.8,669.7 L1405.1,655.3 L1407.7,663.1 L1410.3,655.9 L1414.2,670.3 L1424.7,669.7 L1428.6,661.8 L1431.3,667.7 L1432.8,642.5 L1433.5,620.2 L1449.5,623.9 L1450.0,642.5 L1456.4,647.1 L1462.6,649.0 L1465.1,650.9 L1475.2,652.8 L1476.4,650.3 L1478.9,654.7 L1487.7,658.4 L1489.0,642.5 L1511.5,642.5 L1514.1,656.5 L1516.6,660.9 L1518.5,642.5 L1521.0,647.8 L1521.6,642.5 L1534.1,645.2 L1544.2,650.3 L1547.9,646.5 L1554.2,649.0 L1556.1,642.5 L1562.4,642.5 L1564.2,662.8 L1568.0,659.0 L1572.4,661.6 L1576.8,647.8 L1583.1,645.2 L1585.6,642.5 L1585.5,642.5 L1588.3,676.1 L1590.5,666.3 L1594.5,661.9 L1597.0,642.5 L1768.5,642.5" fill="none" stroke="#6ed0e0" stroke-width="1.6" stroke-linejoin="round"/>
<path d="M76.4,642.5 L76.4,642.5 L434.9,642.5 L436.7,592.4 L492.3,592.4 L493.7,642.5 L630.3,642.5 L633.0,592.3 L681.3,592.3 L685.3,642.5 L703.5,642.5 L705.9,592.1 L713.0,592.1 L714.6,642.5 L1431.9,642.5 L1433.5,592.6 L1586.2,592.6 L1588.1,642.5 L1768.5,642.5 L1768.5,642.5Z" fill="url(#g2o)"/>
<path d="M76.4,642.5 L434.9,642.5 L436.7,592.4 L492.3,592.4 L493.7,642.5 L630.3,642.5 L633.0,592.3 L681.3,592.3 L685.3,642.5 L703.5,642.5 L705.9,592.1 L713.0,592.1 L714.6,642.5 L1431.9,642.5 L1433.5,592.6 L1586.2,592.6 L1588.1,642.5 L1768.5,642.5" fill="none" stroke="#ef843c" stroke-width="1.6" stroke-linejoin="round"/>
</g>
</svg>
<div class="sw" style="top:451.7px;background:#7eb26d"></div>
<div class="sw" style="top:483.7px;background:#eab839"></div>
<div class="sw" style="top:840.7px;background:#7eb26d"></div>
<div class="sw" style="top:872.9px;background:#eab839"></div>
<div class="sw" style="top:904.4px;background:#6ed0e0"></div>
<!-- header icon -->
<svg style="position:absolute;left:22px;top:15px" width="26" height="26" viewBox="0 0 26 26">
<rect x="0" y="0" width="12.2" height="12.2" rx="2" fill="#a2a2a2"/>
<rect x="13" y="0" width="12.2" height="12.2" rx="2" fill="#a2a2a2"/>
<rect x="0" y="13" width="12.2" height="12.2" rx="2" fill="#a2a2a2"/>
<rect x="13" y="13" width="12.2" height="12.2" rx="2" fill="#a2a2a2"/>
</svg>
<svg style="position:absolute;left:205px;top:28px" width="10" height="7" viewBox="0 0 10 7"><path d="M1,1 L9,1 L5,5.5Z" fill="#d8d9da"/></svg>
<!-- buttons -->
<div class="btn" style="left:1123px;width:63px"></div>
<div class="btn" style="left:1191px;width:44px"></div>
<div class="btn" style="left:1241px;width:44px"></div>
<div class="btn" style="left:1290px;width:43px"></div>
<div class="btn" style="left:1339px;width:48px"></div>
<div class="btn" style="left:1406px;width:47px"></div>
<div class="btn" style="left:1475px;width:162px"></div>
<div class="btn" style="left:1642px;width:45px"></div>
<div class="btn" style="left:1692px;width:117px"></div>
<div style="position:absolute;left:1734px;top:6px;width:1px;height:42.7px;background:#29292b"></div>
<!-- icons -->
<svg style="position:absolute;left:0;top:0" width="1839" height="60" viewBox="0 0 1839 60">
<g fill="#e6e6e6">
<rect x="1137.8" y="24.9" width="4.9" height="11.9"/>
<rect x="1144" y="21.9" width="4.6" height="14.9"/>
<rect x="1150" y="27.9" width="4" height="8.9"/>
<rect x="1155.6" y="18.9" width="4.4" height="17.9"/>
</g>
<path d="M1162.2,21.5 h5.5 v4 h4 v5 h-4 v4 h-5.5 v-4 h-4 v-5 h4z" fill="#161719"/>
<defs><linearGradient id="plusg" x1="0" y1="0" x2="0" y2="1"><stop offset="0" stop-color="#f58a1f"/><stop offset="1" stop-color="#fdc113"/></linearGradient></defs>
<path d="M1162.9,22.2 h4.2 v3.8 h3.8 v4 h-3.8 v4 h-4.2 v-4 h-3.9 v-4 h3.9z" fill="url(#plusg)"/>
<!-- star -->
<path d="M1213.1,17.5 L1215.9,23.6 L1222.4,24.3 L1217.6,28.7 L1218.9,35.2 L1213.1,31.9 L1207.3,35.2 L1208.6,28.7 L1203.8,24.3 L1210.3,23.6Z" fill="none" stroke="#9a9a9a" stroke-width="1.8" stroke-linejoin="round"/>
<!-- share -->
<path d="M1259.8,18.65 h-3.4 a2.5,2.5 0 0 0 -2.5,2.5 v10.25 a2.5,2.5 0 0 0 2.5,2.5 h10.2 a2.5,2.5 0 0 0 2.5,-2.5 v-3.4" fill="none" stroke="#9a9a9a" stroke-width="2"/>
<path d="M1258.4,32 C1255.5,28 1255.2,22.5 1260,20 C1262,19 1264.5,18.7 1267.2,18.7 L1267.2,15.8 L1273.6,21.5 L1267.2,27 L1267.2,24.2 C1264,24.1 1261,24.5 1259.7,26.5 C1258.8,28 1258.5,30 1258.4,32Z" fill="#9a9a9a"/>
<!-- save -->
<path d="M1302.4,18 h14.3 l4.2,4.2 v14.2 h-18.5z" fill="none" stroke="#9a9a9a" stroke-width="1.8" stroke-linejoin="round"/>
<rect x="1305.4" y="18" width="8.6" height="6.4" fill="#9a9a9a"/>
<rect x="1310.5" y="19.3" width="2.2" height="3.6" fill="#2a2a2c"/>
<rect x="1305.3" y="28.7" width="12.3" height="7.3" fill="none" stroke="#9a9a9a" stroke-width="1.8"/>
<!-- gear -->
<path d="M1361.27,19.04 L1361.89,15.86 L1365.11,15.86 L1365.73,19.04 L1367.80,19.90 L1370.48,18.09 L1372.76,20.37 L1370.95,23.05 L1371.81,25.12 L1374.99,25.74 L1374.99,28.96 L1371.81,29.58 L1370.95,31.65 L1372.76,34.33 L1370.48,36.61 L1367.80,34.80 L1365.73,35.66 L1365.11,38.84 L1361.89,38.84 L1361.27,35.66 L1359.20,34.80 L1356.52,36.61 L1354.24,34.33 L1356.05,31.65 L1355.19,29.58 L1352.01,28.96 L1352.01,25.74 L1355.19,25.12 L1356.05,23.05 L1354.24,20.37 L1356.52,18.09 L1359.20,19.90Z" fill="#7f7f7f"/>
<circle cx="1363.5" cy="27.35" r="2.1" fill="#29292b"/>
<!-- monitor -->
<rect x="1418.9" y="16.8" width="21.8" height="15.5" rx="1.5" fill="none" stroke="#9a9a9a" stroke-width="1.8"/>
<rect x="1418" y="30" width="23.5" height="3.3" fill="#9a9a9a"/>
<rect x="1427.2" y="33" width="5.4" height="2.5" fill="#9a9a9a"/>
<rect x="1425.5" y="34.6" width="8.5" height="2.2" fill="#9a9a9a"/>
<!-- clock -->
<circle cx="1493.5" cy="28.3" r="7.3" fill="none" stroke="#9a9a9a" stroke-width="1.9"/>
<path d="M1493.2,23.5 v5.2 h-3.3" fill="none" stroke="#9a9a9a" stroke-width="1.6"/>
<!-- caret -->
<path d="M1612.8,25.4 h11.1 l-5.55,6.2z" fill="#9a9a9a"/>
<!-- zoom out -->
<circle cx="1662.6" cy="26.4" r="7.8" fill="none" stroke="#9a9a9a" stroke-width="2.4"/>
<path d="M1668.2,32 L1674,37.5" stroke="#9a9a9a" stroke-width="3" stroke-linecap="round"/>
<rect x="1659" y="25.4" width="7.6" height="2.2" fill="#9a9a9a"/>
<!-- refresh -->
<path d="M1721.5,23.5 A8.6,8.6 0 0 0 1705.8,25.6" fill="none" stroke="#9a9a9a" stroke-width="2.8"/>
<path d="M1723.3,18.5 L1723.3,26.7 L1715.3,26.7Z" fill="#9a9a9a"/>
<path d="M1706,31.3 A8.6,8.6 0 0 0 1721.7,29.2" fill="none" stroke="#9a9a9a" stroke-width="2.8"/>
<path d="M1704.2,36.3 L1704.2,28.1 L1712.2,28.1Z" fill="#9a9a9a"/>
<!-- 15m caret -->
<path d="M1784.7,22 h11.3 l-5.65,6.9z" fill="#9a9a9a"/>
</svg>
<!-- popup -->
<div class="popup"></div>
<svg style="position:absolute;left:912px;top:157px" width="20" height="20" viewBox="0 0 20 20">
<path d="M4.1,3 h10.2 a1.6,1.6 0 0 1 1.6,1.6 v7.5 a1.6,1.6 0 0 1 -1.6,1.6 h-1.6 l1.3,3.3 l-3.9,-3.3 h-6 a1.6,1.6 0 0 1 -1.6,-1.6 v-7.5 a1.6,1.6 0 0 1 1.6,-1.6z" fill="none" stroke="#b4b4b4" stroke-width="1.7" stroke-linejoin="round"/>
</svg>
<div class="t" style="right:1760.2px;top:112.8px;font-size:16px;line-height:16px;color:#d8d9da;">10.0 K</div>
<div class="t" style="right:1760.2px;top:176.5px;font-size:16px;line-height:16px;color:#d8d9da;">7.5 K</div>
<div class="t" style="right:1760.2px;top:239.2px;font-size:16px;line-height:16px;color:#d8d9da;">5.0 K</div>
<div class="t" style="right:1760.2px;top:301.9px;font-size:16px;line-height:16px;color:#d8d9da;">2.5 K</div>
<div class="t" style="right:1760.2px;top:364.5px;font-size:16px;line-height:16px;color:#d8d9da;">0</div>
<div class="t" style="left:-189.0px;width:600px;text-align:center;top:382.5px;font-size:16px;line-height:16px;color:#d8d9da;">7/17 20:00</div>
<div class="t" style="left:-48.7px;width:600px;text-align:center;top:382.5px;font-size:16px;line-height:16px;color:#d8d9da;">7/18 00:00</div>
<div class="t" style="left:91.6px;width:600px;text-align:center;top:382.5px;font-size:16px;line-height:16px;color:#d8d9da;">7/18 04:00</div>
<div class="t" style="left:232.0px;width:600px;text-align:center;top:382.5px;font-size:16px;line-height:16px;color:#d8d9da;">7/18 08:00</div>
<div class="t" style="left:372.3px;width:600px;text-align:center;top:382.5px;font-size:16px;line-height:16px;color:#d8d9da;">7/18 12:00</div>
<div class="t" style="left:512.6px;width:600px;text-align:center;top:382.5px;font-size:16px;line-height:16px;color:#d8d9da;">7/18 16:00</div>
<div class="t" style="left:652.9px;width:600px;text-align:center;top:382.5px;font-size:16px;line-height:16px;color:#d8d9da;">7/18 20:00</div>
<div class="t" style="left:793.2px;width:600px;text-align:center;top:382.5px;font-size:16px;line-height:16px;color:#d8d9da;">7/19 00:00</div>
<div class="t" style="left:933.6px;width:600px;text-align:center;top:382.5px;font-size:16px;line-height:16px;color:#d8d9da;">7/19 04:00</div>
<div class="t" style="left:1073.9px;width:600px;text-align:center;top:382.5px;font-size:16px;line-height:16px;color:#d8d9da;">7/19 08:00</div>
<div class="t" style="left:1214.2px;width:600px;text-align:center;top:382.5px;font-size:16px;line-height:16px;color:#d8d9da;">7/19 12:00</div>
<div class="t" style="left:1354.5px;width:600px;text-align:center;top:382.5px;font-size:16px;line-height:16px;color:#d8d9da;">7/19 16:00</div>
<div class="t" style="right:1768.4px;top:574.7px;font-size:16px;line-height:16px;color:#d8d9da;">5 K</div>
<div class="t" style="right:1768.4px;top:634.5px;font-size:16px;line-height:16px;color:#d8d9da;">0</div>
<div class="t" style="right:1768.4px;top:693.2px;font-size:16px;line-height:16px;color:#d8d9da;">-5 K</div>
<div class="t" style="right:1768.4px;top:752.3px;font-size:16px;line-height:16px;color:#d8d9da;">-10 K</div>
<div class="t" style="left:-197.0px;width:600px;text-align:center;top:771.5px;font-size:16px;line-height:16px;color:#d8d9da;">7/17 20:00</div>
<div class="t" style="left:-56.0px;width:600px;text-align:center;top:771.5px;font-size:16px;line-height:16px;color:#d8d9da;">7/18 00:00</div>
<div class="t" style="left:85.0px;width:600px;text-align:center;top:771.5px;font-size:16px;line-height:16px;color:#d8d9da;">7/18 04:00</div>
<div class="t" style="left:226.0px;width:600px;text-align:center;top:771.5px;font-size:16px;line-height:16px;color:#d8d9da;">7/18 08:00</div>
<div class="t" style="left:367.0px;width:600px;text-align:center;top:771.5px;font-size:16px;line-height:16px;color:#d8d9da;">7/18 12:00</div>
<div class="t" style="left:508.0px;width:600px;text-align:center;top:771.5px;font-size:16px;line-height:16px;color:#d8d9da;">7/18 16:00</div>
<div class="t" style="left:649.0px;width:600px;text-align:center;top:771.5px;font-size:16px;line-height:16px;color:#d8d9da;">7/18 20:00</div>
<div class="t" style="left:790.0px;width:600px;text-align:center;top:771.5px;font-size:16px;line-height:16px;color:#d8d9da;">7/19 00:00</div>
<div class="t" style="left:931.0px;width:600px;text-align:center;top:771.5px;font-size:16px;line-height:16px;color:#d8d9da;">7/19 04:00</div>
<div class="t" style="left:1072.0px;width:600px;text-align:center;top:771.5px;font-size:16px;line-height:16px;color:#d8d9da;">7/19 08:00</div>
<div class="t" style="left:1213.0px;width:600px;text-align:center;top:771.5px;font-size:16px;line-height:16px;color:#d8d9da;">7/19 12:00</div>
<div class="t" style="left:1354.0px;width:600px;text-align:center;top:771.5px;font-size:16px;line-height:16px;color:#d8d9da;">7/19 16:00</div>
<div class="t" style="left:619.2px;width:600px;text-align:center;top:71.0px;font-size:18.3px;line-height:18.3px;color:#d8d9da;font-weight:bold;-webkit-text-stroke:0;">PV Produktion</div>
<div class="t" style="left:619.6px;width:600px;text-align:center;top:531.9px;font-size:18.3px;line-height:18.3px;color:#d8d9da;font-weight:bold;-webkit-text-stroke:0;">Verbrauch /Wallbox / Batterie / Netz</div>
<div class="t" style="right:229.6px;top:415.0px;font-size:16px;line-height:16px;color:#33b5e5;font-weight:bold;-webkit-text-stroke:0;">min</div>
<div class="t" style="right:140.5px;top:415.0px;font-size:16px;line-height:16px;color:#33b5e5;font-weight:bold;-webkit-text-stroke:0;">max</div>
<div class="t" style="right:51.5px;top:415.0px;font-size:16px;line-height:16px;color:#33b5e5;font-weight:bold;-webkit-text-stroke:0;">avg</div>
<div class="t" style="left:79.8px;top:443.5px;font-size:16px;line-height:16px;color:#d8d9da;">String NO</div>
<div class="t" style="right:229.6px;top:443.5px;font-size:16px;line-height:16px;color:#d8d9da;">0</div>
<div class="t" style="right:140.5px;top:443.5px;font-size:16px;line-height:16px;color:#d8d9da;">3.023 K</div>
<div class="t" style="right:51.5px;top:443.5px;font-size:16px;line-height:16px;color:#d8d9da;">895</div>
<div class="t" style="left:79.8px;top:475.5px;font-size:16px;line-height:16px;color:#d8d9da;">String SW</div>
<div class="t" style="right:229.6px;top:475.5px;font-size:16px;line-height:16px;color:#d8d9da;">0</div>
<div class="t" style="right:140.5px;top:475.5px;font-size:16px;line-height:16px;color:#d8d9da;">4.981 K</div>
<div class="t" style="right:51.5px;top:475.5px;font-size:16px;line-height:16px;color:#d8d9da;">1.009 K</div>
<div class="t" style="right:131.9px;top:803.9px;font-size:16px;line-height:16px;color:#33b5e5;font-weight:bold;-webkit-text-stroke:0;">min</div>
<div class="t" style="right:51.1px;top:803.9px;font-size:16px;line-height:16px;color:#33b5e5;font-weight:bold;-webkit-text-stroke:0;">max</div>
<div class="t" style="left:79.8px;top:832.5px;font-size:16px;line-height:16px;color:#d8d9da;">Haus</div>
<div class="t" style="right:131.9px;top:832.5px;font-size:16px;line-height:16px;color:#d8d9da;">161</div>
<div class="t" style="right:51.1px;top:832.5px;font-size:16px;line-height:16px;color:#d8d9da;">4.75 K</div>
<div class="t" style="left:79.8px;top:864.7px;font-size:16px;line-height:16px;color:#d8d9da;">Netz</div>
<div class="t" style="right:131.9px;top:864.7px;font-size:16px;line-height:16px;color:#d8d9da;">-6.87 K</div>
<div class="t" style="right:51.1px;top:864.7px;font-size:16px;line-height:16px;color:#d8d9da;">4.04 K</div>
<div class="t" style="left:79.8px;top:896.2px;font-size:16px;line-height:16px;color:#d8d9da;">Batterie</div>
<div class="t" style="right:131.9px;top:896.2px;font-size:16px;line-height:16px;color:#d8d9da;">-2.91 K</div>
<div class="t" style="right:51.1px;top:896.2px;font-size:16px;line-height:16px;color:#d8d9da;">3.03 K</div>
<div class="t" style="left:59.2px;top:16.2px;font-size:25px;line-height:25px;color:#d8d9da;">Photovoltaik</div>
<div class="t" style="left:1504.7px;top:17.8px;font-size:19.4px;line-height:19.4px;color:#a3a3a3;">Last 2 days</div>
<div class="t" style="left:1741.2px;top:17.3px;font-size:20px;line-height:20px;color:#eb7b18;-webkit-text-stroke:0.35px #eb7b18;">15m</div>
<div class="t" style="left:943.5px;top:157.7px;font-size:19.3px;line-height:19.3px;color:#d8d9da;">Add annotation</div>
<!-- scrollbars -->
<div class="scroll" style="left:1831px;top:92px;width:8px;height:811px;background:linear-gradient(#43445a,#4c4d52)"></div>
<div class="scroll" style="left:1800px;top:803px;width:8px;height:77px;background:linear-gradient(#45465e,#505056)"></div>
<div style="position:absolute;left:0;top:914.7px;width:1839px;height:3px;background:#1e1f21"></div>
<div style="position:absolute;left:1831px;top:914.7px;width:2.2px;height:3px;background:#7a7a7a"></div>
</body></html>
